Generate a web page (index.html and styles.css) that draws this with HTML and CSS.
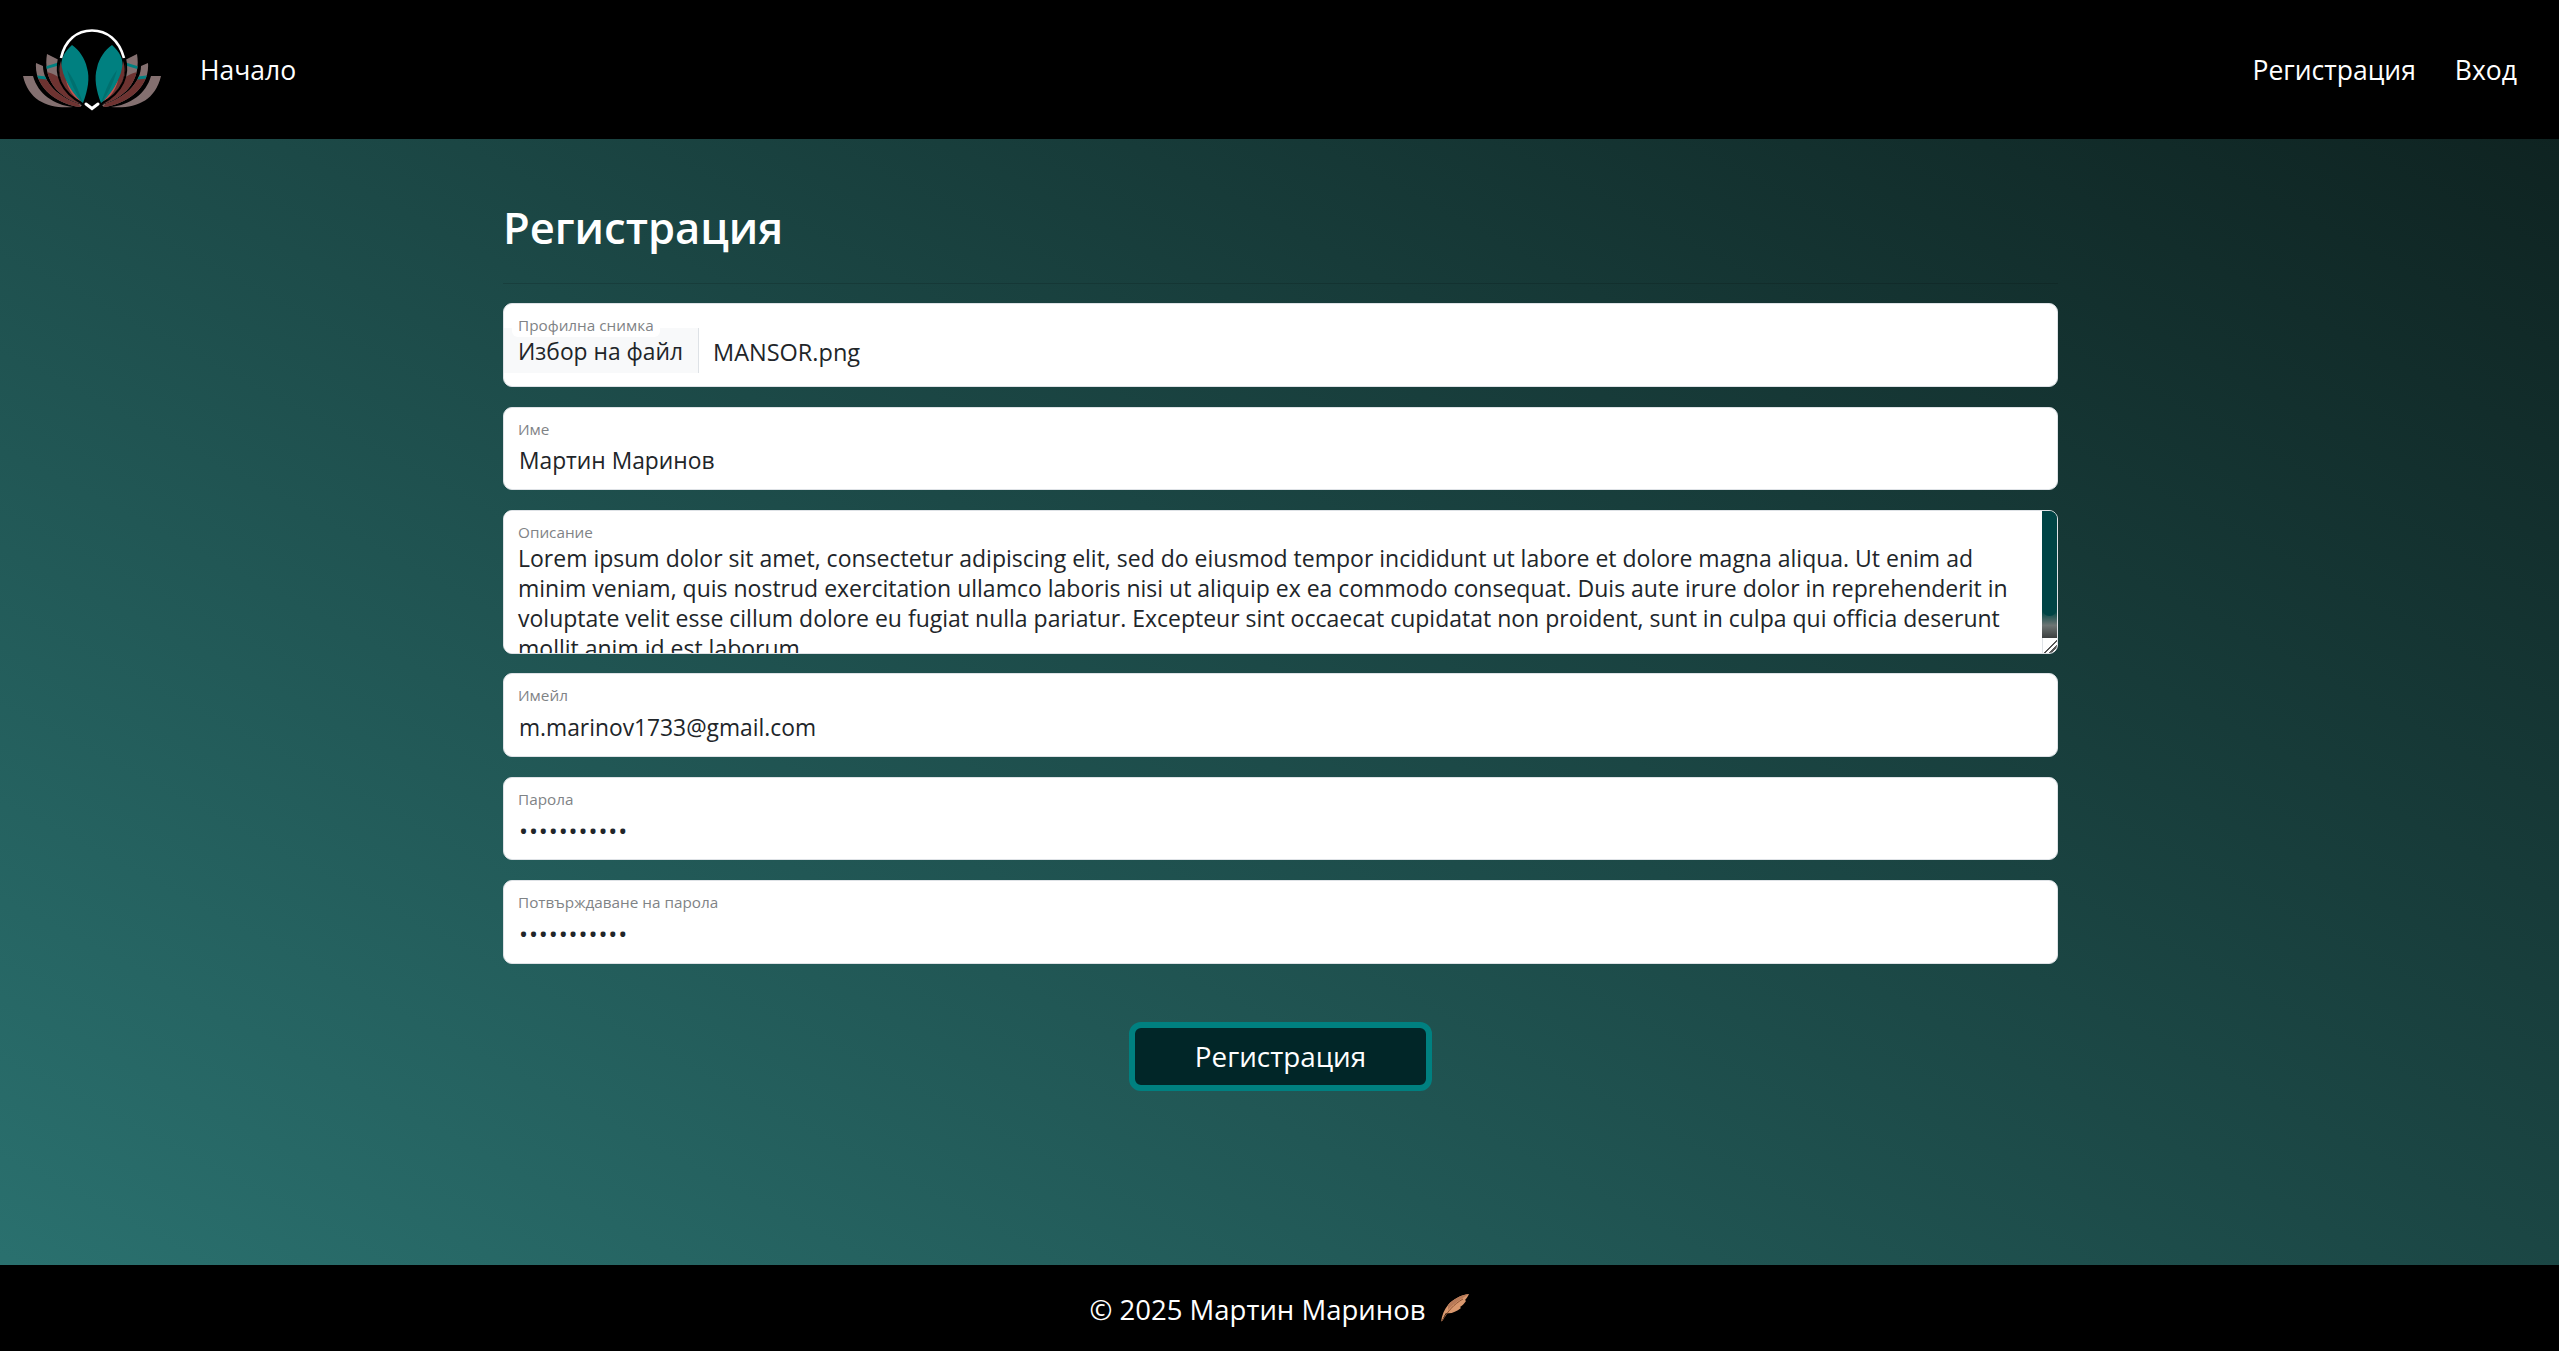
FILE: index.html
```html
<!DOCTYPE html>
<html lang="bg">
<head>
  <meta charset="UTF-8">
  <title>Регистрация</title>
  <link rel="stylesheet" href="styles.css">
</head>
<body>

  <header class="topbar">
    <div class="nav-left">
      <svg class="logo" viewBox="0 0 140 84" width="140" height="84" aria-hidden="true">
        <defs>
          <clipPath id="petal2"><path d="M14 35 L21 38 C21 54 36 70 60 77 L58 79 C36 76 12 60 14 35Z"/></clipPath>
          <clipPath id="petal3"><path d="M25 26 L37 32 C34 50 44 66 60 75 L60 76 C42 72 20 56 25 26Z"/></clipPath>
          <g id="half">
            <path d="M1 48 L11 48 C16 66 32 77 51 79 C28 81 7 74 1 48Z" fill="#847070"/>
            <g clip-path="url(#petal2)">
              <rect x="10" y="30" width="55" height="52" fill="#847070"/>
              <path d="M10 50 C30 48 40 56 60 80 L60 84 L10 84Z" fill="#6e3331"/>
              <path d="M10 47 L38 50 L38 53 L10 50Z" fill="#008080"/>
            </g>
            <g clip-path="url(#petal3)">
              <rect x="18" y="24" width="46" height="56" fill="#847070"/>
              <path d="M18 44 C36 42 48 60 62 78 L18 78Z" fill="#6e3331"/>
              <path d="M18 40 L38 34 L38 37 L18 43Z" fill="#008080"/>
            </g>
            <path d="M39 33 C34 46 40 64 61 75 C48 62 42 50 39 33Z" fill="#6e3331"/>
            <path d="M40 38 L43 42 L42 46Z" fill="#c25550"/>
            <path d="M44 52 C48 60 54 68 60 74 C52 70 46 62 44 52Z" fill="#c25550"/>
            <path d="M37 30 C33 46 38 64 61 76" fill="none" stroke="#000" stroke-width="2"/>
            <path d="M50 17 C42 24 38 32 40 40 C42 52 52 68 61 75 C66 62 68 50 65 40 C63 30 57 22 50 17Z" fill="#008080"/>
            <path d="M45 42 C48 54 54 66 61 75 C56 62 54 54 45 42Z" fill="#00706f"/>
          </g>
        </defs>
        <use href="#half"/>
        <use href="#half" transform="translate(140 0) scale(-1 1)"/>
        <path d="M39 30 C43 12 55 2.500 70 2.500 C85 2.500 97 12 102 30" fill="none" stroke="#fff" stroke-width="2.600"/>
        <path d="M64 76 L70 80.500 L76 76" fill="none" stroke="#fff" stroke-width="3" stroke-linecap="round"/>
      </svg>
      <a class="nav-link" href="#">Начало</a>
    </div>
    <nav class="nav-right">
      <a class="nav-link" href="#">Регистрация</a>
      <a class="nav-link" href="#">Вход</a>
    </nav>
  </header>

  <main class="content">
    <h1>Регистрация</h1>

    <form class="reg-form">
      <div class="field">
        <label class="label-file">Профилна снимка</label>
        <div class="file-row">
          <span class="file-btn">Избор на файл</span>
          <span class="file-name">MANSOR.png</span>
        </div>
      </div>

      <div class="field">
        <label for="name">Име</label>
        <input id="name" type="text" value="Мартин Маринов">
      </div>

      <div class="field field-area">
        <label for="bio">Описание</label>
        <textarea id="bio">Lorem ipsum dolor sit amet, consectetur adipiscing elit, sed do eiusmod tempor incididunt ut labore et dolore magna aliqua. Ut enim ad minim veniam, quis nostrud exercitation ullamco laboris nisi ut aliquip ex ea commodo consequat. Duis aute irure dolor in reprehenderit in voluptate velit esse cillum dolore eu fugiat nulla pariatur. Excepteur sint occaecat cupidatat non proident, sunt in culpa qui officia deserunt mollit anim id est laborum.</textarea>
        <div class="scroll-track"><div class="scroll-thumb"></div></div>
        <div class="scroll-corner"></div>
      </div>

      <div class="field">
        <label for="email">Имейл</label>
        <input id="email" type="email" value="m.marinov1733@gmail.com">
      </div>

      <div class="field">
        <label for="pass">Парола</label>
        <input id="pass" class="secret" type="password" value="12345678901">
      </div>

      <div class="field">
        <label for="pass2">Потвърждаване на парола</label>
        <input id="pass2" class="secret" type="password" value="12345678901">
      </div>

      <div class="actions">
        <button class="submit" type="button">Регистрация</button>
      </div>
    </form>
  </main>

  <footer class="bottombar">
    <span class="copy">© 2025 Мартин Маринов</span>
    <svg class="feather" viewBox="0 0 30 30" width="30" height="30" aria-hidden="true">
      <path d="M2 29 C3 22 5 17 9 12 C14 6 22 2 30 1 C29 3 28 5 26 7 L27 8 C25 11 23 13 21 14 L22 15 C17 19 12 21 7 20 C5 23 4 26 2 29Z" fill="#d9986e"/>
      <path d="M9 12 C14 6 22 2 30 1 C24 5 16 9 9 17Z" fill="#b77a58"/>
      <path d="M3 28 C9 18 15 11 24 6" fill="none" stroke="#8f5535" stroke-width="1"/>
    </svg>
  </footer>

</body>
</html>
```

FILE: styles.css
```css
* {
  box-sizing: border-box;
}
html, body {
  height: 100%;
}
body {
  margin: 0;
  display: flex;
  flex-direction: column;
  font-family: "Open Sans", "Noto Sans", sans-serif;
  font-size: 22.8px;
  color: #212529;
  background: linear-gradient(to top right, #2b7371, #0d1f1d);
}
a {
  text-decoration: none;
}
.topbar {
  height: 139px;
  flex: none;
  background: #000;
  display: flex;
  align-items: center;
  justify-content: space-between;
  padding: 0 42px 0 22px;
}
.nav-left {
  display: flex;
  align-items: center;
  gap: 38px;
}
.nav-right {
  display: flex;
  gap: 39px;
}
.logo {
  display: block;
}
.nav-link {
  color: #fff;
  font-size: 26.5px;
}
.content {
  flex: 1;
  width: 1557px;
  margin: 0 auto;
  padding: 63px 0 0 2px;
}
h1 {
  margin: 0 0 19px;
  padding-bottom: 29px;
  border-bottom: 1px solid rgba(0, 0, 0, 0.14);
  color: #fff;
  font-size: 43.5px;
  font-weight: 600;
  line-height: 1.2;
}
.reg-form {
  display: flex;
  flex-direction: column;
  gap: 19.8px;
}
.field {
  position: relative;
  height: 83.6px;
  background: #fff;
  border: 1px solid #dee2e6;
  border-radius: 9px;
  overflow: hidden;
}
.field label {
  position: absolute;
  top: 10px;
  left: 14px;
  z-index: 1;
  font-size: 15.3px;
  line-height: 1.5;
  color: #7f8386;
}
.field .label-file {
  top: 10px;
  left: 8px;
  padding: 0 6px;
  background: #fff;
  border-radius: 6px;
}
.field input {
  display: block;
  width: 100%;
  height: 100%;
  border: 0;
  outline: 0;
  padding: 32px 15px 8px;
  font: inherit;
  color: inherit;
  background: transparent;
}
.field .secret {
  font-size: 24px;
  letter-spacing: 0.9px;
}
.field-area {
  height: 143.6px;
}
.field textarea {
  display: block;
  width: 100%;
  height: 100%;
  border: 0;
  outline: 0;
  padding: 32px 30px 0 14px;
  font: inherit;
  font-size: 23px;
  line-height: 30px;
  color: inherit;
  overflow: hidden;
  resize: none;
}
.scroll-track {
  position: absolute;
  top: 0;
  right: 0;
  width: 15px;
  height: 127px;
  background: linear-gradient(#0a4a48 80%, #6d7574 90%, #3c3f3f);
}
.scroll-thumb {
  height: 105px;
  background: #004445;
  border-radius: 0 0 8px 8px;
}
.scroll-corner {
  position: absolute;
  right: 0;
  bottom: 0;
  width: 15px;
  height: 15px;
  border-left: 1px solid #dee2e6;
  background: linear-gradient(135deg, transparent 52%, #555 52%, #555 60%, transparent 60%, transparent 72%, #555 72%, #555 80%, transparent 80%);
}
.file-row {
  display: flex;
  align-items: stretch;
  height: 45px;
  margin-top: 24px;
}
.file-btn {
  background: #f8f9fa;
  border-right: 1px solid #dee2e6;
  padding: 2px 15px 0 14px;
  display: flex;
  align-items: center;
}
.file-name {
  display: flex;
  align-items: center;
  padding: 2px 0 0 14px;
  font-size: 23.5px;
}
.actions {
  display: flex;
  justify-content: center;
  margin-top: 38px;
}
.submit {
  width: 303px;
  height: 69px;
  background: #012628;
  border: 6px solid #008080;
  border-radius: 12px;
  color: #fff;
  font: inherit;
  font-size: 27.8px;
}
.bottombar {
  height: 86px;
  flex: none;
  background: #000;
  color: #fff;
  font-size: 27.5px;
  display: flex;
  align-items: center;
  justify-content: center;
  gap: 14px;
}
.copy {
  padding-top: 3px;
}
.feather {
  display: block;
}
```
